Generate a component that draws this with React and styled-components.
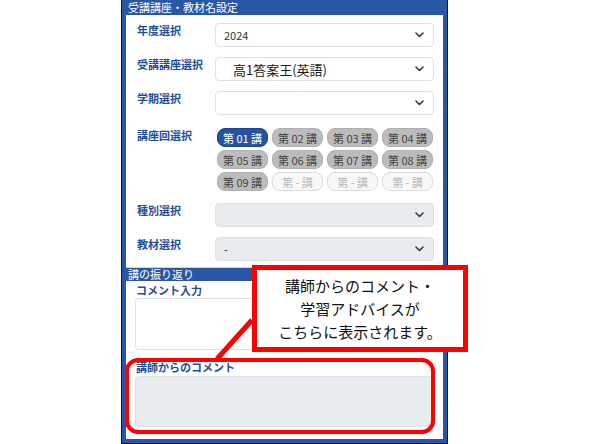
import styled, { createGlobalStyle } from 'styled-components'

const GlobalStyle = createGlobalStyle`
  body {
    margin: 0;
    background: #fff;
    font-family: "Noto Sans CJK JP", "Noto Sans", sans-serif;
  }
`

const Stage = styled.div`
  position: relative;
  width: 590px;
  height: 444px;
  overflow: hidden;
  background: #fff;
`

const Frame = styled.div`
  margin-left: 121px;
  width: 327px;
  height: 444px;
  box-sizing: border-box;
  border: 1px solid #151515;
  border-top: none;
`

const Inner = styled.div`
  height: 100%;
  box-sizing: border-box;
  border: 4px solid #2a56a6;
  border-top: none;
  display: flex;
  flex-direction: column;
`

const SectionBar = styled.div`
  height: ${({ $h }) => $h}px;
  line-height: ${({ $h }) => $h}px;
  background: #2a56a6;
  color: #fff;
  font-size: 11px;
  padding-left: 2px;
  white-space: nowrap;
`

const FormPanel = styled.div`
  display: grid;
  grid-template-columns: 78px 219px;
  row-gap: 10px;
  padding: 8px 0 6px 11px;
  border-bottom: 1px solid #d4d4d4;
`

const Label = styled.div`
  font-size: 11px;
  line-height: 14px;
  font-weight: 700;
  color: #1f4e9b;
  padding-top: ${({ $pad }) => $pad || 0}px;
  white-space: nowrap;
`

const SelectBox = styled.div`
  height: 24px;
  box-sizing: border-box;
  border: 1px solid #dee2e6;
  border-radius: 4px;
  background: ${({ $disabled }) => ($disabled ? '#e9ecef' : '#fff')};
  display: flex;
  align-items: center;
  justify-content: space-between;
  padding: 0 9px 0 ${({ $indent }) => $indent || 8}px;
  font-size: ${({ $size }) => $size || 11}px;
  color: ${({ $size }) => ($size ? '#1a1a1a' : '#333')};
`

const ButtonGrid = styled.div`
  display: grid;
  grid-template-columns: repeat(4, 51px);
  grid-auto-rows: 19px;
  column-gap: 4px;
  row-gap: 3px;
  margin: 3px 0 2px 2px;
`

const tones = {
  active: { bg: '#2553a3', border: '#1d4690', color: '#fff' },
  normal: { bg: '#bcbcbc', border: '#b0b0b0', color: '#444' },
  empty: { bg: '#f8f8f8', border: '#dcdcdc', color: '#b8b8b8' },
}

const LessonButton = styled.div`
  box-sizing: border-box;
  border-radius: 8px;
  border: 1px solid ${({ $tone }) => tones[$tone].border};
  background: ${({ $tone }) => tones[$tone].bg};
  color: ${({ $tone }) => tones[$tone].color};
  font-size: 11px;
  display: flex;
  align-items: center;
  justify-content: center;
  white-space: nowrap;
`

const CommentPanel = styled.div`
  padding: 0 9px;
`

const CommentLabel = styled(Label)`
  padding-left: 1px;
  margin-top: ${({ $top }) => $top}px;
  margin-bottom: ${({ $bottom }) => $bottom}px;
`

const TextBox = styled.div`
  height: ${({ $h }) => $h}px;
  box-sizing: border-box;
  border: 1px solid #dee2e6;
  border-radius: 4px;
  background: ${({ $readonly }) => ($readonly ? '#e9ecef' : '#fff')};
`

const Highlight = styled.div`
  position: absolute;
  left: 125px;
  top: 358px;
  width: 310px;
  height: 76px;
  box-sizing: border-box;
  border: 4px solid #ff0000;
  border-radius: 13px;
`

const Callout = styled.div`
  position: absolute;
  left: 252px;
  top: 265px;
  width: 216px;
  height: 87px;
  box-sizing: border-box;
  border: 5px solid #ff0000;
  background: #fff;
  display: flex;
  flex-direction: column;
  align-items: center;
  justify-content: center;
  font-size: 15px;
  line-height: 23px;
  color: #111;
  white-space: nowrap;
`

const Pointer = styled.svg`
  position: absolute;
  left: 0;
  top: 0;
  pointer-events: none;
`

function Chevron() {
  return (
    <svg width="9" height="6" viewBox="0 0 9 6">
      <path d="M1 1l3.5 3.5L8 1" fill="none" stroke="#343a40" strokeWidth="1.6" strokeLinecap="round" strokeLinejoin="round" />
    </svg>
  )
}

function Select({ value, ...rest }) {
  return (
    <SelectBox {...rest}>
      <span>{value}</span>
      <Chevron />
    </SelectBox>
  )
}

const lessons = [
  ['第 01 講', 'active'], ['第 02 講', 'normal'], ['第 03 講', 'normal'], ['第 04 講', 'normal'],
  ['第 05 講', 'normal'], ['第 06 講', 'normal'], ['第 07 講', 'normal'], ['第 08 講', 'normal'],
  ['第 09 講', 'normal'], ['第 - 講', 'empty'], ['第 - 講', 'empty'], ['第 - 講', 'empty'],
]

export default function App() {
  return (
    <>
      <GlobalStyle />
      <Stage>
        <Frame>
          <Inner>
            <SectionBar $h={15}>受講講座・教材名設定</SectionBar>
            <FormPanel>
              <Label>年度選択</Label>
              <Select value="2024" />
              <Label>受講講座選択</Label>
              <Select value="高1答案王(英語)" $size={13} $indent={17} />
              <Label>学期選択</Label>
              <Select value="" />
              <Label $pad={3}>講座回選択</Label>
              <ButtonGrid>
                {lessons.map(([text, tone], i) => (
                  <LessonButton key={i} $tone={tone}>{text}</LessonButton>
                ))}
              </ButtonGrid>
              <Label>種別選択</Label>
              <Select value="" $disabled />
              <Label>教材選択</Label>
              <Select value="-" $disabled />
            </FormPanel>
            <SectionBar $h={13}>講の振り返り</SectionBar>
            <CommentPanel>
              <CommentLabel $top={2} $bottom={1}>コメント入力</CommentLabel>
              <TextBox $h={52} />
              <CommentLabel $top={10} $bottom={2}>講師からのコメント</CommentLabel>
              <TextBox $h={51} $readonly />
            </CommentPanel>
          </Inner>
        </Frame>

        <Highlight />
        <Pointer width="590" height="444">
          <line x1="252" y1="320" x2="217" y2="359" stroke="#ff0000" strokeWidth="5" />
        </Pointer>
        <Callout>
          <div>講師からのコメント・</div>
          <div>学習アドバイスが</div>
          <div>こちらに表示されます。</div>
        </Callout>
      </Stage>
    </>
  )
}
